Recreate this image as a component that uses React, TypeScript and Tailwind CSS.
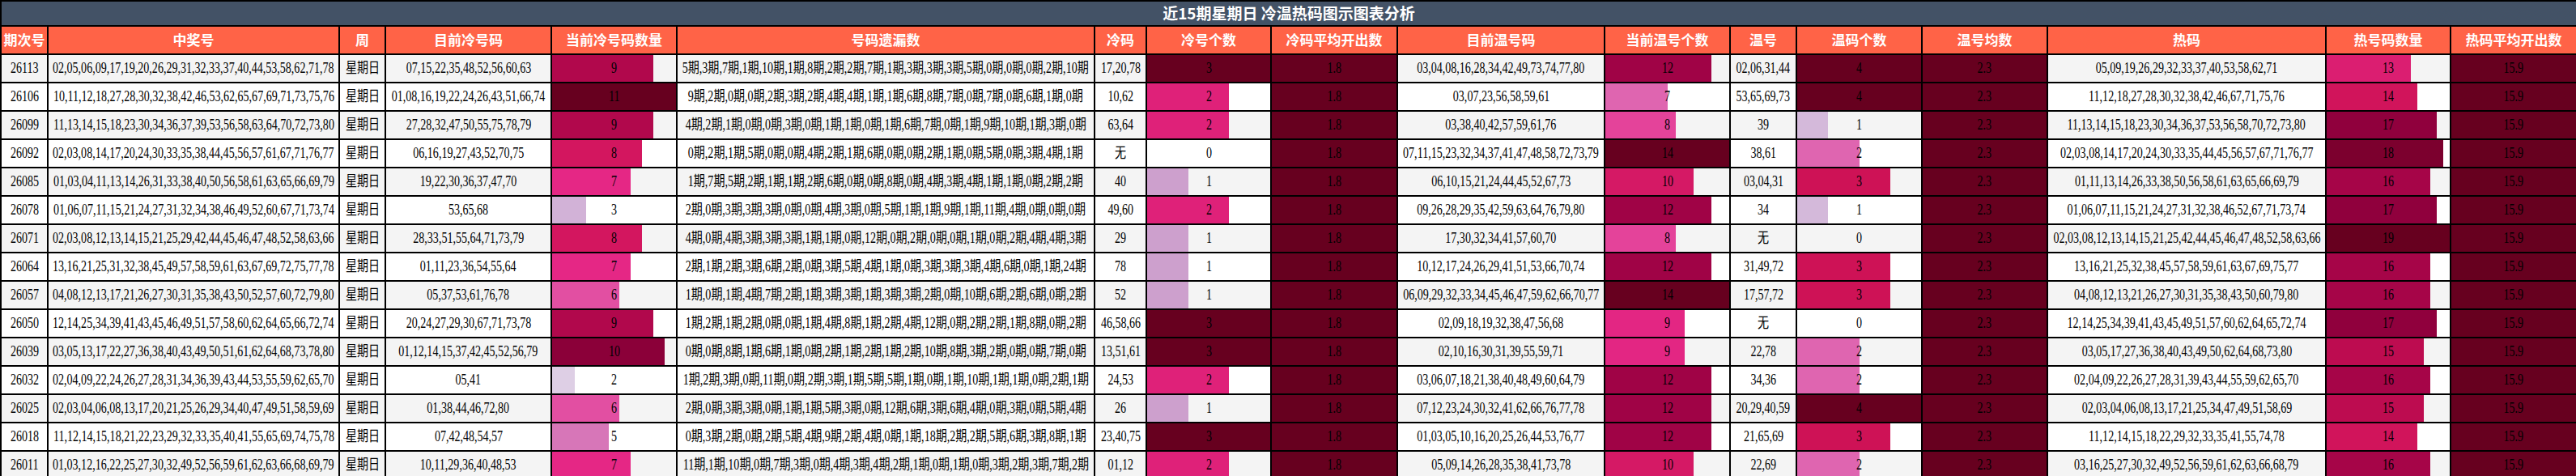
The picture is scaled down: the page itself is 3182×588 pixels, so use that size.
import React from "react";

const W = [58, 360, 57, 205, 155, 516, 64, 154, 156, 256, 155, 82, 155, 155, 344, 154, 156];
const HEAD = ["期次号", "中奖号", "周", "目前冷号码", "当前冷号码数量", "号码遗漏数", "冷码", "冷号个数", "冷码平均开出数", "目前温号码", "当前温号个数", "温号", "温码个数", "温号均数", "热码", "热号码数量", "热码平均开出数"];

type R = [string, string, string, number, string, string, number, string, number, string, number, string, number];
const rows: R[] = [
  ["26113", "02,05,06,09,17,19,20,26,29,31,32,33,37,40,44,53,58,62,71,78", "07,15,22,35,48,52,56,60,63", 9, "5期,3期,7期,1期,10期,1期,8期,2期,2期,7期,1期,3期,3期,3期,5期,0期,0期,0期,2期,10期", "17,20,78", 3, "03,04,08,16,28,34,42,49,73,74,77,80", 12, "02,06,31,44", 4, "05,09,19,26,29,32,33,37,40,53,58,62,71", 13],
  ["26106", "10,11,12,18,27,28,30,32,38,42,46,53,62,65,67,69,71,73,75,76", "01,08,16,19,22,24,26,43,51,66,74", 11, "9期,2期,0期,0期,2期,3期,2期,4期,4期,1期,1期,6期,8期,7期,0期,7期,0期,6期,1期,0期", "10,62", 2, "03,07,23,56,58,59,61", 7, "53,65,69,73", 4, "11,12,18,27,28,30,32,38,42,46,67,71,75,76", 14],
  ["26099", "11,13,14,15,18,23,30,34,36,37,39,53,56,58,63,64,70,72,73,80", "27,28,32,47,50,55,75,78,79", 9, "4期,2期,1期,0期,0期,3期,0期,1期,1期,0期,1期,6期,7期,0期,1期,9期,10期,1期,3期,0期", "63,64", 2, "03,38,40,42,57,59,61,76", 8, "39", 1, "11,13,14,15,18,23,30,34,36,37,53,56,58,70,72,73,80", 17],
  ["26092", "02,03,08,14,17,20,24,30,33,35,38,44,45,56,57,61,67,71,76,77", "06,16,19,27,43,52,70,75", 8, "0期,2期,1期,5期,0期,0期,4期,2期,1期,6期,0期,0期,2期,1期,0期,5期,0期,3期,4期,1期", "无", 0, "07,11,15,23,32,34,37,41,47,48,58,72,73,79", 14, "38,61", 2, "02,03,08,14,17,20,24,30,33,35,44,45,56,57,67,71,76,77", 18],
  ["26085", "01,03,04,11,13,14,26,31,33,38,40,50,56,58,61,63,65,66,69,79", "19,22,30,36,37,47,70", 7, "1期,7期,5期,2期,1期,1期,2期,6期,0期,0期,8期,0期,4期,3期,4期,1期,1期,0期,2期,2期", "40", 1, "06,10,15,21,24,44,45,52,67,73", 10, "03,04,31", 3, "01,11,13,14,26,33,38,50,56,58,61,63,65,66,69,79", 16],
  ["26078", "01,06,07,11,15,21,24,27,31,32,34,38,46,49,52,60,67,71,73,74", "53,65,68", 3, "2期,0期,3期,3期,3期,0期,0期,4期,3期,0期,5期,1期,1期,9期,1期,11期,4期,0期,0期,0期", "49,60", 2, "09,26,28,29,35,42,59,63,64,76,79,80", 12, "34", 1, "01,06,07,11,15,21,24,27,31,32,38,46,52,67,71,73,74", 17],
  ["26071", "02,03,08,12,13,14,15,21,25,29,42,44,45,46,47,48,52,58,63,66", "28,33,51,55,64,71,73,79", 8, "4期,0期,4期,3期,3期,3期,1期,1期,0期,12期,0期,2期,0期,0期,1期,0期,2期,4期,4期,3期", "29", 1, "17,30,32,34,41,57,60,70", 8, "无", 0, "02,03,08,12,13,14,15,21,25,42,44,45,46,47,48,52,58,63,66", 19],
  ["26064", "13,16,21,25,31,32,38,45,49,57,58,59,61,63,67,69,72,75,77,78", "01,11,23,36,54,55,64", 7, "2期,1期,2期,3期,6期,2期,0期,3期,5期,4期,1期,0期,3期,3期,3期,4期,6期,0期,1期,24期", "78", 1, "10,12,17,24,26,29,41,51,53,66,70,74", 12, "31,49,72", 3, "13,16,21,25,32,38,45,57,58,59,61,63,67,69,75,77", 16],
  ["26057", "04,08,12,13,17,21,26,27,30,31,35,38,43,50,52,57,60,72,79,80", "05,37,53,61,76,78", 6, "1期,0期,1期,4期,7期,2期,1期,3期,3期,1期,3期,3期,2期,0期,10期,6期,2期,6期,0期,2期", "52", 1, "06,09,29,32,33,34,45,46,47,59,62,66,70,77", 14, "17,57,72", 3, "04,08,12,13,21,26,27,30,31,35,38,43,50,60,79,80", 16],
  ["26050", "12,14,25,34,39,41,43,45,46,49,51,57,58,60,62,64,65,66,72,74", "20,24,27,29,30,67,71,73,78", 9, "1期,2期,1期,2期,0期,0期,1期,4期,8期,1期,2期,4期,12期,0期,2期,2期,1期,8期,0期,2期", "46,58,66", 3, "02,09,18,19,32,38,47,56,68", 9, "无", 0, "12,14,25,34,39,41,43,45,49,51,57,60,62,64,65,72,74", 17],
  ["26039", "03,05,13,17,22,27,36,38,40,43,49,50,51,61,62,64,68,73,78,80", "01,12,14,15,37,42,45,52,56,79", 10, "0期,0期,8期,1期,6期,1期,0期,2期,1期,2期,1期,2期,10期,8期,3期,2期,0期,0期,7期,0期", "13,51,61", 3, "02,10,16,30,31,39,55,59,71", 9, "22,78", 2, "03,05,17,27,36,38,40,43,49,50,62,64,68,73,80", 15],
  ["26032", "02,04,09,22,24,26,27,28,31,34,36,39,43,44,53,55,59,62,65,70", "05,41", 2, "1期,2期,3期,0期,11期,0期,2期,3期,1期,5期,5期,1期,0期,1期,10期,1期,1期,0期,2期,1期", "24,53", 2, "03,06,07,18,21,38,40,48,49,60,64,79", 12, "34,36", 2, "02,04,09,22,26,27,28,31,39,43,44,55,59,62,65,70", 16],
  ["26025", "02,03,04,06,08,13,17,20,21,25,26,29,34,40,47,49,51,58,59,69", "01,38,44,46,72,80", 6, "2期,0期,3期,3期,0期,1期,1期,5期,3期,0期,12期,6期,3期,6期,4期,0期,3期,0期,5期,4期", "26", 1, "07,12,23,24,30,32,41,62,66,76,77,78", 12, "20,29,40,59", 4, "02,03,04,06,08,13,17,21,25,34,47,49,51,58,69", 15],
  ["26018", "11,12,14,15,18,21,22,23,29,32,33,35,40,41,55,65,69,74,75,78", "07,42,48,54,57", 5, "0期,3期,2期,0期,2期,5期,4期,9期,2期,4期,0期,1期,18期,2期,2期,5期,6期,3期,8期,1期", "23,40,75", 3, "01,03,05,10,16,20,25,26,44,53,76,77", 12, "21,65,69", 3, "11,12,14,15,18,22,29,32,33,35,41,55,74,78", 14],
  ["26011", "01,03,12,16,22,25,27,30,32,49,52,56,59,61,62,63,66,68,69,79", "10,11,29,36,40,48,53", 7, "11期,1期,10期,0期,7期,3期,0期,4期,3期,4期,2期,1期,0期,1期,0期,3期,2期,3期,7期,2期", "01,12", 2, "05,09,14,26,28,35,38,41,73,78", 10, "22,69", 2, "03,16,25,27,30,32,49,52,56,59,61,62,63,66,68,79", 16],
];

const STOPS = ["#f7f4f9", "#e7e1ef", "#d4b9da", "#c994c7", "#df65b0", "#e7298a", "#ce1256", "#980043", "#67001f"];
function hex(h: string) { return [1, 3, 5].map((i) => parseInt(h.slice(i, i + 2), 16)); }
function color(t: number) {
  const x = Math.max(0, Math.min(1, t)) * (STOPS.length - 1);
  const i = Math.min(Math.floor(x), STOPS.length - 2);
  const f = x - i;
  const a = hex(STOPS[i]), b = hex(STOPS[i + 1]);
  return `rgb(${a.map((v, k) => Math.round(v + (b[k] - v) * f)).join(",")})`;
}

const Txt = ({ children }: { children: React.ReactNode }) => (
  <div className="flex justify-center">
    <span className="shrink-0 inline-block scale-x-[0.78] whitespace-nowrap">{children}</span>
  </div>
);

const Cell = ({ children }: { children: React.ReactNode }) => (
  <td className="border-2 border-black p-0 overflow-visible"><Txt>{children}</Txt></td>
);

function Bar({ v, max }: { v: number; max: number }) {
  const t = v / max;
  return (
    <td className="border-2 border-black p-0 relative">
      <div className="absolute left-0 top-0 bottom-0" style={{ width: `${t * 100}%`, background: v ? color(t) : "transparent" }} />
      <div className="relative"><Txt>{v}</Txt></div>
    </td>
  );
}

export default function App() {
  const serif = { fontFamily: '"Liberation Serif", "Noto Sans CJK SC", serif' };
  const sans = { fontFamily: '"Noto Sans CJK SC", sans-serif' };
  return (
    <div className="w-[3182px] h-[588px] overflow-hidden bg-white">
      <table className="table-fixed border-collapse w-[3182px] text-[18px] text-black" style={serif}>
        <colgroup>{W.map((w, i) => <col key={i} style={{ width: w }} />)}</colgroup>
        <thead>
          <tr className="h-[27px]">
            <th colSpan={17} className="bg-[#435266] border-2 border-black text-white text-[19px] font-bold text-center p-0" style={sans}>
              近15期星期日 冷温热码图示图表分析
            </th>
          </tr>
          <tr className="h-[35px]">
            {HEAD.map((h) => (
              <th key={h} className="bg-[#ff6347] border-2 border-black text-white text-[17px] font-bold p-0 whitespace-nowrap" style={sans}>{h}</th>
            ))}
          </tr>
        </thead>
        <tbody>
          {rows.map((r, i) => (
            <tr key={r[0]} className={`h-[35px] ${i % 2 === 0 ? "bg-[#f4f4f4]" : "bg-white"}`}>
              <Cell>{r[0]}</Cell>
              <Cell>{r[1]}</Cell>
              <Cell>星期日</Cell>
              <Cell>{r[2]}</Cell>
              <Bar v={r[3]} max={11} />
              <Cell>{r[4]}</Cell>
              <Cell>{r[5]}</Cell>
              <Bar v={r[6]} max={3} />
              <Bar v={1.8} max={1.8} />
              <Cell>{r[7]}</Cell>
              <Bar v={r[8]} max={14} />
              <Cell>{r[9]}</Cell>
              <Bar v={r[10]} max={4} />
              <Bar v={2.3} max={2.3} />
              <Cell>{r[11]}</Cell>
              <Bar v={r[12]} max={19} />
              <Bar v={15.9} max={15.9} />
            </tr>
          ))}
        </tbody>
      </table>
    </div>
  );
}
